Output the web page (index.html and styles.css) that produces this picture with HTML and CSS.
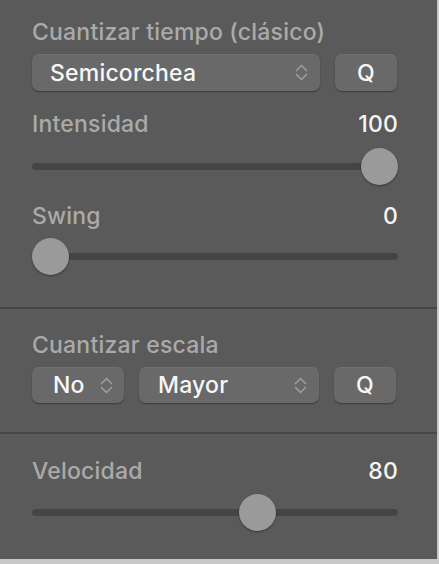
FILE: index.html
```html
<!DOCTYPE html>
<html lang="es">
<head>
    <meta charset="UTF-8">
    <meta name="viewport" content="width=device-width, initial-scale=1.0">
    <title>Cuantizar</title>
    <link rel="stylesheet" href="styles.css">
</head>
<body>
    <div class="panel">
        <!-- Cuantizar tiempo -->
        <div class="section section-time">
            <div class="title">Cuantizar tiempo (clásico)</div>
            <div class="row">
                <div class="popup popup-wide">
                    <span>Semicorchea</span>
                    <svg class="chevron" width="13" height="19" viewBox="0 0 13 19"><path d="M1.5 7.5 L6.5 2.5 L11.5 7.5 M1.5 11.5 L6.5 16.5 L11.5 11.5"/></svg>
                </div>
                <div class="qbutton">Q</div>
            </div>

            <div class="field field-first">
                <div class="label-row">
                    <span class="label">Intensidad</span>
                    <span class="value">100</span>
                </div>
                <div class="slider">
                    <div class="track"></div>
                    <div class="thumb" style="--pos: 1"></div>
                </div>
            </div>

            <div class="field">
                <div class="label-row">
                    <span class="label">Swing</span>
                    <span class="value">0</span>
                </div>
                <div class="slider slider-swing">
                    <div class="track"></div>
                    <div class="thumb" style="--pos: 0"></div>
                </div>
            </div>
        </div>

        <!-- Cuantizar escala -->
        <div class="section section-scale">
            <div class="title">Cuantizar escala</div>
            <div class="row row-scale">
                <div class="popup popup-small">
                    <span>No</span>
                    <svg class="chevron" width="13" height="19" viewBox="0 0 13 19"><path d="M1.5 7.5 L6.5 2.5 L11.5 7.5 M1.5 11.5 L6.5 16.5 L11.5 11.5"/></svg>
                </div>
                <div class="popup popup-mid">
                    <span>Mayor</span>
                    <svg class="chevron" width="13" height="19" viewBox="0 0 13 19"><path d="M1.5 7.5 L6.5 2.5 L11.5 7.5 M1.5 11.5 L6.5 16.5 L11.5 11.5"/></svg>
                </div>
                <div class="qbutton">Q</div>
            </div>
        </div>

        <!-- Velocidad -->
        <div class="section section-velocity">
            <div class="label-row">
                <span class="label">Velocidad</span>
                <span class="value">80</span>
            </div>
            <div class="slider slider-velocity">
                <div class="track"></div>
                <div class="thumb" style="--pos: 0.63"></div>
            </div>
        </div>
    </div>
</body>
</html>
```

FILE: styles.css
```css
/* General */
body {
    margin: 0;
    background: #c8c8c8;
    font-family: Inter, "Liberation Sans", sans-serif;
    font-size: 23px;
    font-weight: 500;
    letter-spacing: 0.2px;
    line-height: 28px;
}

.panel {
    width: 437px;
    height: 559px;
    background: #5a5a5a;
}

.section {
    padding: 0 39px 0 32px;
}

.section-time {
    padding-top: 18px;
    padding-bottom: 32px;
    border-bottom: 2px solid #474747;
}

.section-scale {
    padding-top: 22px;
    padding-bottom: 29px;
    border-bottom: 2px solid #474747;
}

.section-velocity {
    padding-top: 23px;
}

.title,
.label {
    color: #aaaaaa;
}

.value {
    color: #f4f4f4;
}

/* Popups and buttons */
.row {
    display: flex;
    gap: 15px;
    margin-top: 8px;
    height: 37px;
}

.row-scale {
    height: 36px;
}

.popup,
.qbutton {
    background: #696969;
    border-radius: 7px;
    box-shadow: 0 1px 1.5px rgba(0, 0, 0, 0.35), inset 0 1px 0 rgba(255, 255, 255, 0.06);
    color: #f6f6f6;
    display: flex;
    align-items: center;
}

.popup {
    justify-content: space-between;
    padding: 0 12px 0 18px;
}

.popup-wide {
    width: 288px;
    box-sizing: border-box;
}

.popup-small {
    width: 92px;
    box-sizing: border-box;
    padding-left: 21px;
    padding-right: 11px;
}

.popup-mid {
    width: 180px;
    box-sizing: border-box;
    padding-left: 19px;
}

.qbutton {
    width: 62px;
    justify-content: center;
}

.chevron path {
    fill: none;
    stroke: #9c9c9c;
    stroke-width: 1.7;
    stroke-linecap: round;
    stroke-linejoin: round;
}

/* Sliders */
.field {
    margin-top: 18px;
}

.field-first {
    margin-top: 19px;
}

.label-row {
    display: flex;
    justify-content: space-between;
}

.slider {
    position: relative;
    height: 36px;
    margin-top: 10px;
}

.slider-swing {
    height: 37px;
    margin-top: 8px;
}

.slider-velocity {
    height: 38px;
    margin-top: 8px;
}

.track {
    position: absolute;
    left: 0;
    right: 0;
    top: calc(50% - 3.5px);
    height: 7px;
    border-radius: 4px;
    background: #454545;
}

.thumb {
    position: absolute;
    top: calc(50% - 18.5px);
    left: calc((100% - 37px) * var(--pos));
    width: 37px;
    height: 37px;
    border-radius: 50%;
    background: #9a9a9a;
    box-shadow: 0 1px 2px rgba(0, 0, 0, 0.4);
}
```
